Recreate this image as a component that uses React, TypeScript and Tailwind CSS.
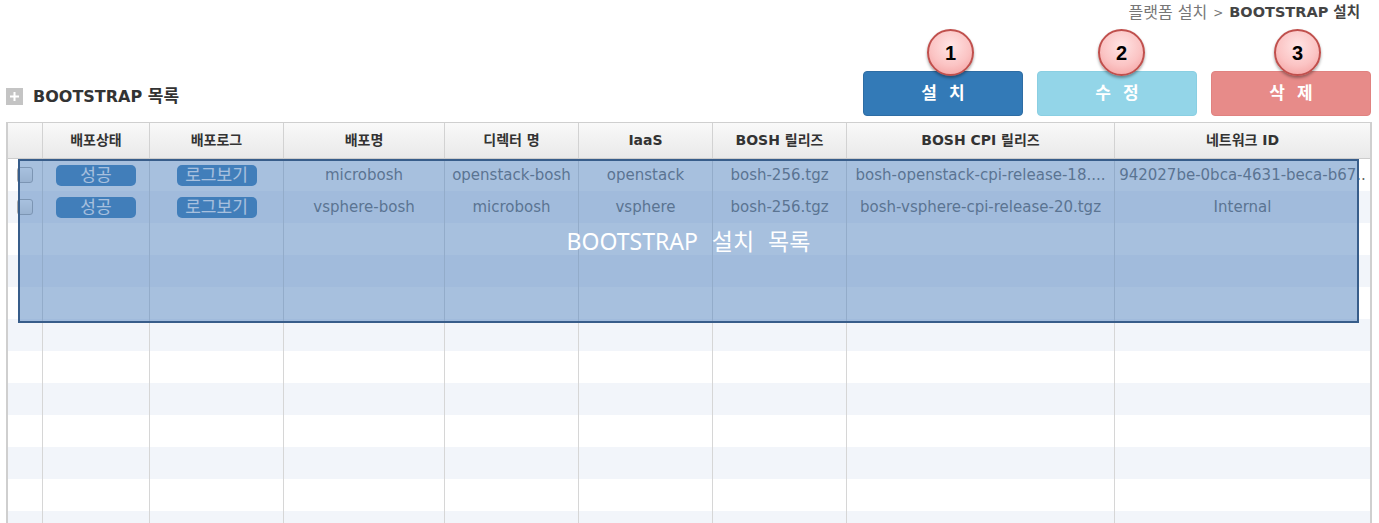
import React from "react";

const cols = "grid-cols-[35px_107px_134px_161px_134px_134px_134px_268px_255px]";

const headers = ["", "배포상태", "배포로그", "배포명", "디렉터 명", "IaaS", "BOSH 릴리즈", "BOSH CPI 릴리즈", "네트워크 ID"];

type Row = { name: string; director: string; iaas: string; bosh: string; cpi: string; net: string };

const rows: (Row | null)[] = [
  {
    name: "microbosh",
    director: "openstack-bosh",
    iaas: "openstack",
    bosh: "bosh-256.tgz",
    cpi: "bosh-openstack-cpi-release-18....",
    net: "942027be-0bca-4631-beca-b67..",
  },
  {
    name: "vsphere-bosh",
    director: "microbosh",
    iaas: "vsphere",
    bosh: "bosh-256.tgz",
    cpi: "bosh-vsphere-cpi-release-20.tgz",
    net: "Internal",
  },
  null, null, null, null, null, null, null, null, null, null,
];

function Circle({ n, left }: { n: number; left: string }) {
  return (
    <div
      className={`pointer-events-none absolute top-[-43px] ${left} flex h-[47px] w-[47px] items-center justify-center rounded-full border-2 border-[#c0504d] bg-[radial-gradient(circle_at_50%_35%,#ffe4e4_0%,#fbc4c4_55%,#f29a9a_100%)] shadow-[0_2px_3px_rgba(0,0,0,0.35)]`}
    >
      <span className="font-['Liberation_Sans',sans-serif] text-[20px] font-bold leading-none text-black">{n}</span>
    </div>
  );
}

function Btn({ label, cls, n, left }: { label: [string, string]; cls: string; n: number; left: string }) {
  return (
    <div className={`relative flex h-[45px] w-[160px] items-center justify-center gap-[12px] rounded-[4px] border ${cls}`}>
      <span className="text-[17px] font-bold text-white">{label[0]}</span>
      <span className="text-[17px] font-bold text-white">{label[1]}</span>
      <Circle n={n} left={left} />
    </div>
  );
}

export default function App() {
  return (
    <div className="relative h-[523px] w-[1379px] overflow-hidden bg-white px-[6px] font-['DejaVu_Sans','Noto_Sans_CJK_KR',sans-serif]">
      {/* breadcrumb */}
      <div className="flex h-[26px] items-center justify-end pr-[13px]">
        <span className="text-[16px] text-[#777]">플랫폼 설치</span>
        <span className="mx-[6px] text-[12px] text-[#777]">&gt;</span>
        <span className="text-[14.5px] font-bold text-[#444]">BOOTSTRAP 설치</span>
      </div>

      {/* title + buttons */}
      <div className="mt-[45px] flex h-[45px] items-end justify-between pr-[2px]">
        <div className="flex items-center gap-[10px] pb-[7px]">
          <div className="flex h-[17px] w-[17px] items-center justify-center bg-[#c4c4c4]">
            <svg width="9" height="9" viewBox="0 0 9 9">
              <rect x="3.5" y="0" width="2" height="9" fill="white" />
              <rect x="0" y="3.5" width="9" height="2" fill="white" />
            </svg>
          </div>
          <span className="text-[16px] font-bold text-[#333]">
            BOOTSTRAP <span className="text-[17px]">목록</span>
          </span>
        </div>
        <div className="flex gap-[14px]">
          <Btn label={["설", "치"]} cls="bg-[#337ab7] border-[#2e6da4]" n={1} left="left-[63px]" />
          <Btn label={["수", "정"]} cls="bg-[#93d5e8] border-[#8acfe2]" n={2} left="left-[60px]" />
          <Btn label={["삭", "제"]} cls="bg-[#e78b89] border-[#e08280]" n={3} left="left-[62px]" />
        </div>
      </div>

      {/* table */}
      <div className="mt-[6px] w-[1366px] border-x-2 border-t border-[#cfcfcf]">
        <div className={`grid ${cols} h-[36px] border-b border-[#cccccc] bg-gradient-to-b from-[#f9f9f9] to-[#e9e9e9]`}>
          {headers.map((h, i) => (
            <div
              key={i}
              className={`flex items-center justify-center text-[14px] font-bold text-[#333] ${i < headers.length - 1 ? "border-r border-[#d2d2d2]" : ""}`}
            >
              {h}
            </div>
          ))}
        </div>
        {rows.map((r, idx) => (
          <div key={idx} className={`grid ${cols} h-[32px] ${idx % 2 === 1 ? "bg-[#f2f5fa]" : "bg-white"}`}>
            <div className="flex items-center justify-center border-r border-[#d6d6d6]">
              {r && (
                <div className="h-[16px] w-[16px] rounded-[3px] border border-[#a9a9a9] bg-gradient-to-b from-white to-[#e4e4e4]" />
              )}
            </div>
            <div className="flex items-center justify-center border-r border-[#d6d6d6]">
              {r && (
                <div className="flex h-[21px] w-[80px] items-center justify-center rounded-[5px] bg-[#337ab7] text-[17px] leading-none text-white">
                  성공
                </div>
              )}
            </div>
            <div className="flex items-center justify-center border-r border-[#d6d6d6]">
              {r && (
                <div className="flex h-[21px] w-[80px] items-center justify-center rounded-[5px] bg-[#337ab7] text-[17px] leading-none text-white">
                  로그보기
                </div>
              )}
            </div>
            {[r?.name, r?.director, r?.iaas, r?.bosh, r?.cpi, r?.net].map((t, j) => (
              <div
                key={j}
                className={`flex items-center overflow-hidden px-[4px] ${j < 5 ? "border-r border-[#d6d6d6]" : ""}`}
              >
                <div className="w-full overflow-hidden whitespace-nowrap text-center text-[15px] text-[#666]">{t ?? ""}</div>
              </div>
            ))}
          </div>
        ))}
      </div>

      {/* annotation overlay */}
      <div className="absolute left-[18px] top-[159px] flex h-[164px] w-[1341px] items-center justify-center border-2 border-[#385d8a] bg-[#4f81bd]/50">
        <span className="font-['Noto_Sans','Noto_Sans_CJK_KR',sans-serif] text-[23px] text-white [word-spacing:8px]">
          BOOTSTRAP 설치 목록
        </span>
      </div>
    </div>
  );
}
